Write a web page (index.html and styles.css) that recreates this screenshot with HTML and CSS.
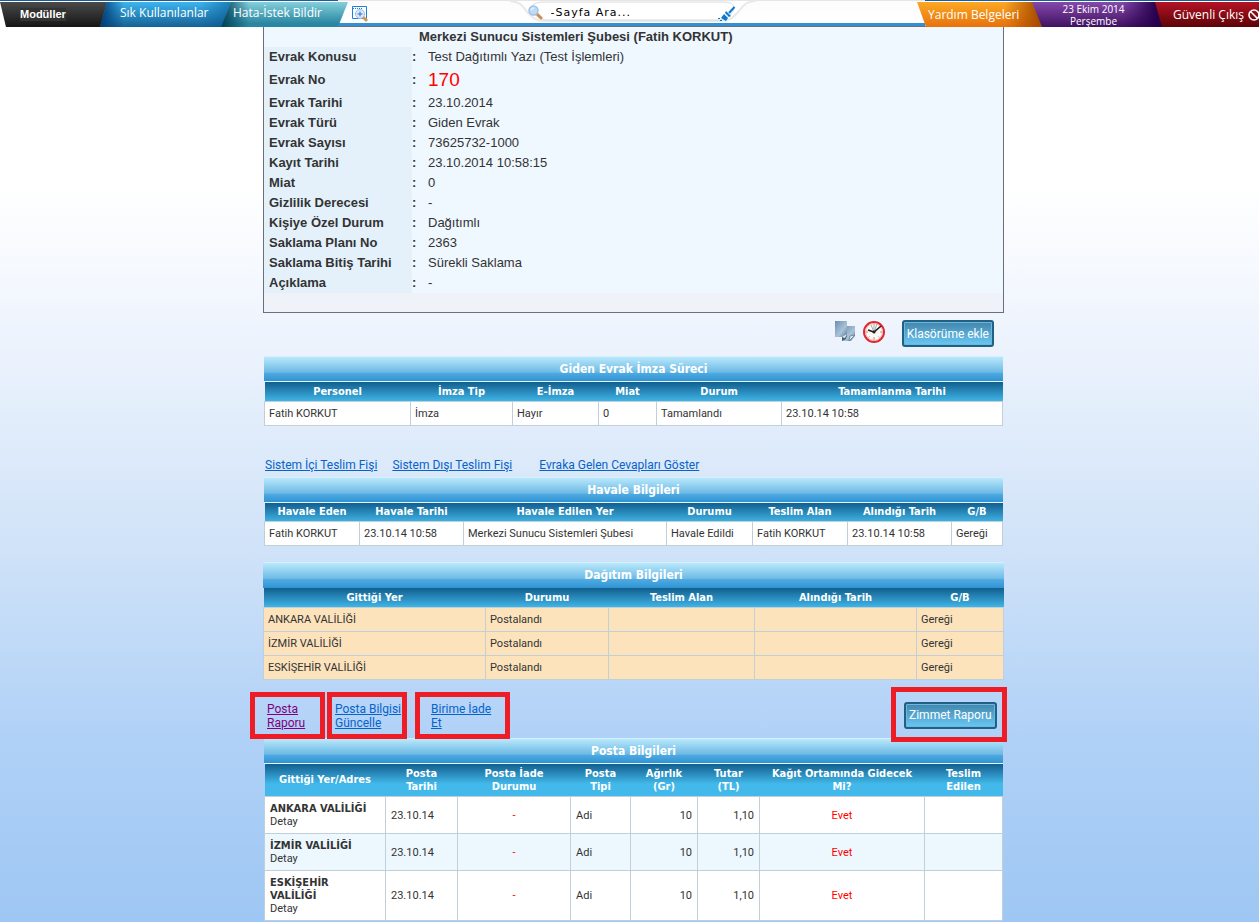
FILE: index.html
```html
<!DOCTYPE html>
<html lang="tr">
<head>
<meta charset="utf-8">
<title>Evrak</title>
<link rel="stylesheet" href="styles.css">
</head>
<body>
<header class="topbar">
  <nav class="tabs">
    <a class="tab tab-modules" href="#"><span>Modüller</span></a>
    <a class="tab tab-favorites" href="#">Sık Kullanılanlar</a>
    <a class="tab tab-report" href="#">Hata-İstek Bildir</a>
  </nav>
  <div class="middle">
    <button class="icon-button preview" type="button" aria-label="Önizleme">
      <svg width="18" height="18" viewBox="0 0 18 18"><path d="M1.500 1.500h14v12h-14z" fill="#fff" stroke="#1c7fe0"/><path d="M2 3.500h9" stroke="#1c7fe0" stroke-dasharray="1 1"/><path d="M12 12l4 4" stroke="#d59a52" stroke-width="3"/><circle cx="9" cy="9" r="4.500" fill="#dcebfb" stroke="#9bbce0"/><path d="M6.500 9h5M9 6.500v5" stroke="#2d6fc4"/></svg>
    </button>
    <form class="search">
      <svg class="search-shape" viewBox="0 0 246 23" preserveAspectRatio="none" aria-hidden="true"><path d="M0 1C14 2 13 9 20 15C26 21 30 21 36 21H210C218 21 222 19 228 12C234 5 235 2 246 1" fill="#fff" stroke="#e9e9e9" stroke-width="2"/><path d="M34 2C22 2 18 8 24 14Q29 20 36 20H208Q216 20 221 14C227 7 224 2 212 2Z" fill="#fff" stroke="#dcdcdc"/></svg>
      <svg class="lens" width="15" height="15" viewBox="0 0 15 15" aria-hidden="true"><path d="M9 9l4 4" stroke="#cf8f4c" stroke-width="3" stroke-linecap="round"/><circle cx="5.500" cy="5.500" r="4.500" fill="#bcdcf7" stroke="#a3c2e6" stroke-width="1.500"/><path d="M3 5a3 3 0 0 1 3-2" stroke="#fff" fill="none"/></svg>
      <input type="text" class="search-input" value="-Sayfa Ara..." aria-label="Sayfa Ara">
      <button class="icon-button broom" type="button" aria-label="Temizle">
        <svg width="18" height="16" viewBox="0 0 18 16"><path d="M16.500 1L11 7" stroke="#0b78cf" stroke-width="2"/><path d="M8 5l5 5-2 1-4-4z" fill="#0b78cf"/><path d="M6 8l4 4-2 3-5-3z" fill="#0b78cf"/><path d="M0 12h2v1H0zM2 14h2v1H2z" fill="#0b78cf"/></svg>
      </button>
    </form>
  </div>
  <nav class="tabs">
    <a class="tab tab-help" href="#">Yardım Belgeleri</a>
    <div class="tab tab-date">23 Ekim 2014<br>Perşembe</div>
    <a class="tab tab-exit" href="#">Güvenli Çıkış
      <svg width="14" height="14" viewBox="0 0 14 14" aria-hidden="true"><circle cx="7" cy="7" r="5" fill="none" stroke="#fff" stroke-width="1.600"/><path d="M3.500 3.500l7 7" stroke="#fff" stroke-width="1.600"/></svg></a>
  </nav>
</header>
<main class="page">
  <section class="summary">
    <table class="facts">
      <thead><tr><td></td><th class="unit" colspan="2">Merkezi Sunucu Sistemleri Şubesi (Fatih KORKUT)</th></tr></thead>
      <tbody>
      <tr><th scope="row">Evrak Konusu</th><td class="colon">:</td><td>Test Dağıtımlı Yazı (Test İşlemleri)</td></tr>
      <tr class="number-row"><th scope="row">Evrak No</th><td class="colon">:</td><td class="number">170</td></tr>
      <tr><th scope="row">Evrak Tarihi</th><td class="colon">:</td><td>23.10.2014</td></tr>
      <tr><th scope="row">Evrak Türü</th><td class="colon">:</td><td>Giden Evrak</td></tr>
      <tr><th scope="row">Evrak Sayısı</th><td class="colon">:</td><td>73625732-1000</td></tr>
      <tr><th scope="row">Kayıt Tarihi</th><td class="colon">:</td><td>23.10.2014 10:58:15</td></tr>
      <tr><th scope="row">Miat</th><td class="colon">:</td><td>0</td></tr>
      <tr><th scope="row">Gizlilik Derecesi</th><td class="colon">:</td><td>-</td></tr>
      <tr><th scope="row">Kişiye Özel Durum</th><td class="colon">:</td><td>Dağıtımlı</td></tr>
      <tr><th scope="row">Saklama Planı No</th><td class="colon">:</td><td>2363</td></tr>
      <tr><th scope="row">Saklama Bitiş Tarihi</th><td class="colon">:</td><td>Sürekli Saklama</td></tr>
      <tr><th scope="row">Açıklama</th><td class="colon">:</td><td>-</td></tr>
      </tbody>
    </table>
    <div class="summary-foot"></div>
  </section>

  <div class="tools">
    <button class="icon-button" type="button" aria-label="Kopyala">
      <svg width="22" height="22" viewBox="0 0 22 22"><defs><linearGradient id="sheet" x2="1" y2="1"><stop stop-color="#6d8db0"/><stop offset=".6" stop-color="#a9c3d8"/><stop offset="1" stop-color="#5d7d9f"/></linearGradient></defs><path d="M1 1h12v16H1z" fill="url(#sheet)"/><path d="M13 6h8v10l-4 5H8v-4h5z" fill="url(#sheet)"/><path d="M21 15l-5 1-1 5z" fill="#e3edf4" stroke="#56728e" stroke-width=".7"/><path d="M8 17l5-3-1 5-4 2z" fill="#46617e"/><path d="M8 17l5-3-2 4z" fill="#e3edf4"/></svg>
    </button>
    <button class="icon-button" type="button" aria-label="Geçmiş">
      <svg width="24" height="24" viewBox="0 0 24 24"><circle cx="12" cy="12" r="10" fill="#fbfbf8" stroke="#dc2a30" stroke-width="2"/><circle cx="12" cy="12" r="8.500" fill="none" stroke="#f3a7a7"/><path d="M12 12L9 5M12 12V4M12 12l3-8" stroke="#aaa"/><path d="M12 17v3M4 12h2M18 12h2M6.500 17.500l1-1M17.500 17.500l-1-1" stroke="#e27a7a"/><path d="M6 10l6 2 7-6" fill="none" stroke="#222" stroke-width="1.600"/><circle cx="12" cy="12" r="1.500" fill="#222"/></svg>
    </button>
    <button class="btn" type="button">Klasörüme ekle</button>
  </div>

  <table class="grid imza">
    <caption>Giden Evrak İmza Süreci</caption>
    <colgroup><col><col><col><col><col><col></colgroup>
    <thead><tr><th>Personel</th><th>İmza Tip</th><th>E-İmza</th><th>Miat</th><th>Durum</th><th>Tamamlanma Tarihi</th></tr></thead>
    <tbody><tr><td>Fatih KORKUT</td><td>İmza</td><td>Hayır</td><td>0</td><td>Tamamlandı</td><td>23.10.14 10:58</td></tr></tbody>
  </table>

  <nav class="slips">
    <a href="#">Sistem İçi Teslim Fişi</a>
    <a href="#">Sistem Dışı Teslim Fişi</a>
    <a class="answers" href="#">Evraka Gelen Cevapları Göster</a>
  </nav>

  <table class="grid havale">
    <caption>Havale Bilgileri</caption>
    <colgroup><col><col><col><col><col><col><col></colgroup>
    <thead><tr><th>Havale Eden</th><th>Havale Tarihi</th><th>Havale Edilen Yer</th><th>Durumu</th><th>Teslim Alan</th><th>Alındığı Tarih</th><th>G/B</th></tr></thead>
    <tbody><tr><td>Fatih KORKUT</td><td>23.10.14 10:58</td><td>Merkezi Sunucu Sistemleri Şubesi</td><td>Havale Edildi</td><td>Fatih KORKUT</td><td>23.10.14 10:58</td><td>Gereği</td></tr></tbody>
  </table>

  <table class="grid dagitim">
    <caption>Dağıtım Bilgileri</caption>
    <colgroup><col><col><col><col><col></colgroup>
    <thead><tr><th>Gittiği Yer</th><th>Durumu</th><th>Teslim Alan</th><th>Alındığı Tarih</th><th>G/B</th></tr></thead>
    <tbody>
      <tr><td>ANKARA VALİLİĞİ</td><td>Postalandı</td><td></td><td></td><td>Gereği</td></tr>
      <tr><td>İZMİR VALİLİĞİ</td><td>Postalandı</td><td></td><td></td><td>Gereği</td></tr>
      <tr><td>ESKİŞEHİR VALİLİĞİ</td><td>Postalandı</td><td></td><td></td><td>Gereği</td></tr>
    </tbody>
  </table>

  <div class="post-actions">
    <div class="mark mark-report"><a class="visited" href="#">Posta<br>Raporu</a></div>
    <div class="mark mark-update"><a href="#">Posta Bilgisi<br>Güncelle</a></div>
    <div class="mark mark-return"><a href="#">Birime İade<br>Et</a></div>
    <div class="mark mark-button"><button class="btn" type="button">Zimmet Raporu</button></div>
  </div>

  <table class="grid posta">
    <caption>Posta Bilgileri</caption>
    <colgroup><col><col><col><col><col><col><col><col></colgroup>
    <thead><tr><th>Gittiği Yer/Adres</th><th>Posta<br>Tarihi</th><th>Posta İade<br>Durumu</th><th>Posta<br>Tipi</th><th>Ağırlık<br>(Gr)</th><th>Tutar<br>(TL)</th><th>Kağıt Ortamında Gidecek<br>Mi?</th><th>Teslim<br>Edilen</th></tr></thead>
    <tbody>
      <tr><td><b>ANKARA VALİLİĞİ</b>Detay</td><td>23.10.14</td><td class="alert">-</td><td>Adi</td><td class="num">10</td><td class="num">1,10</td><td class="alert">Evet</td><td></td></tr>
      <tr class="alt"><td><b>İZMİR VALİLİĞİ</b>Detay</td><td>23.10.14</td><td class="alert">-</td><td>Adi</td><td class="num">10</td><td class="num">1,10</td><td class="alert">Evet</td><td></td></tr>
      <tr><td><b>ESKİŞEHİR<br>VALİLİĞİ</b>Detay</td><td>23.10.14</td><td class="alert">-</td><td>Adi</td><td class="num">10</td><td class="num">1,10</td><td class="alert">Evet</td><td></td></tr>
    </tbody>
  </table>
</main>
</body>
</html>
```
FILE: styles.css
```css
* { box-sizing: border-box; }
body {
  margin: 0;
  min-height: 100vh;
  font: 11px/13px Tahoma, Roboto, sans-serif;
  color: #333;
  background: linear-gradient(#fff 20%, #f3f7fe 32%, #cfe2f8 60%, #b0d1f7 80%, #9ec7f3 100%);
}
a { color: #0663cb; }
a.visited { color: #800080; }
.icon-button { border: 0; padding: 0; background: none; display: block; line-height: 0; }
svg { display: block; }

.topbar {
  position: relative;
  display: flex;
  height: 26px;
  background: linear-gradient(#15609c 1px, #fff 1px);
}
.tabs { display: flex; height: 27px; padding-top: 2px; }
.tab {
  display: flex;
  align-items: center;
  height: 25px;
  color: #fff;
  font: 12px/12px Tahoma, "Open Sans", sans-serif;
  text-decoration: none;
}
.tab-modules {
  width: 108px;
  padding-left: 20px;
  font: bold 11px/13px "Liberation Sans", sans-serif;
  background: linear-gradient(#4a4a4a, #151515);
  clip-path: polygon(0 0, 100% 0, 100% 100%, 6px 100%);
}
.tab-modules span { background: #333; }
.tab-favorites {
  width: 131px;
  margin-left: -8px;
  padding: 0 0 3px 20px;
  background: linear-gradient(90deg, #003c78, transparent 24px, transparent 100px, #00508c88), linear-gradient(#3cb4ee, #176295);
  clip-path: polygon(7px 0, 100% 0, 100% 100%, 0 100%);
}
.tab-report {
  width: 127px;
  margin-left: -10px;
  padding: 0 0 3px 12px;
  background: linear-gradient(90deg, #003f55, transparent 28px), linear-gradient(#84cfdb, #2a87a3 85%);
  clip-path: polygon(10px 0, 100% 0, 117px 100%, 0 100%);
}
.middle {
  flex: 1;
  display: grid;
  grid-template-columns: 1fr auto 1fr;
  height: 26px;
  margin: 0 -8px 0 -10px;
  padding: 0 8px 0 10px;
  border-bottom: 3px solid #3090d1;
  background: linear-gradient(#e6e6e6 1px, #fcfcfc 1px, #fff 20px);
}
.preview { width: 18px; margin: 4px 0 0 3px; }
.search {
  position: relative;
  display: flex;
  align-items: center;
  gap: 8px;
  width: 246px;
  height: 23px;
  padding: 1px 20px 0 18px;
}
.search-shape { position: absolute; inset: 0; width: 100%; height: 100%; }
.lens, .search-input, .broom { position: relative; }
.broom { margin-top: 4px; }
.search-input {
  flex: 1;
  min-width: 0;
  padding: 0;
  border: 0;
  background: none;
  color: #000;
  font: 11px "DejaVu Sans", sans-serif;
  letter-spacing: 1px;
}
.tab-help {
  width: 125px;
  padding: 0 0 0 11px;
  background: linear-gradient(90deg, transparent 88px, #a84c00 122px), linear-gradient(#fba824, #e8720c);
  clip-path: polygon(0 0, 100% 0, 100% 100%, 9px 100%);
}
.tab-date {
  width: 131px;
  margin-left: -10px;
  justify-content: center;
  padding-right: 8px;
  font-size: 10px;
  text-align: center;
  background: linear-gradient(90deg, transparent 90px, #26004c 125px), linear-gradient(#8549ab, #401160);
  clip-path: polygon(0 0, 100% 0, 100% 100%, 10px 100%);
}
.tab-exit {
  width: 104px;
  margin-left: -8px;
  padding-left: 18px;
  gap: 3px;
  white-space: nowrap;
  background: linear-gradient(#b51324, #5b0408);
  clip-path: polygon(0 0, 100% 0, 100% 100%, 7px 100%);
}
.tab-exit svg { flex: none; }

.page { width: 749px; max-width: 100%; margin: 0 auto; padding-left: 8px; }
.summary {
  border: 1px solid #6b7078;
  background: #eff7ff;
  color: #333;
  font: 13px/16px "Liberation Sans", Arial, sans-serif;
}
.facts { width: 100%; border-collapse: collapse; }
.facts td, .facts th { height: 20px; padding: 0; text-align: left; }
.facts tbody th { width: 148px; padding-left: 5px; background: #e4f1fb; }
.facts .colon { width: 16px; font-weight: bold; }
.facts .unit { padding-left: 7px; }
.facts .number-row > * { height: 26px; }
.facts .number { color: #f00; font-size: 19px; }
.summary-foot { height: 19px; background: #eff2f8; }

.tools {
  display: flex;
  justify-content: flex-end;
  align-items: flex-start;
  gap: 6px;
  padding: 7px 10px 9px;
}
.tools .btn { margin-left: 10px; }
.btn {
  height: 27px;
  padding: 0 3px;
  border: 2px solid #1f6184;
  border-radius: 3px;
  background: linear-gradient(#4285ac, #69c8f5);
  box-shadow: inset 0 0 0 1px #6db7dc;
  color: #fff;
  font: 12px/14px Tahoma, Roboto, sans-serif;
  white-space: nowrap;
}

.grid {
  width: calc(100% - 2px);
  margin: 0 1px;
  table-layout: fixed;
  border-collapse: collapse;
}
.grid caption {
  height: 26px;
  padding-top: 1px;
  border-top: 1px solid #d3f0fc;
  border-bottom: 1px solid #e4f5fd;
  background: linear-gradient(#b9e8fb, #6cb9e5 64%, #50aae0 66%, #2f94d4);
  color: #fff;
  font: bold 12px/22px Tahoma, "DejaVu Sans Condensed", sans-serif;
}
.grid thead tr { background: linear-gradient(#115e8e, #42b9ea 20px); }
.grid th {
  height: 19px;
  padding: 0;
  color: #fff;
  font: bold 11px/13px Tahoma, "DejaVu Sans Condensed", sans-serif;
}
.grid td { height: 24px; padding: 0 4px; border: 1px solid #c0cfd8; background: #fff; }
.grid b { display: block; font-family: Tahoma, "DejaVu Sans Condensed", sans-serif; }
.imza col:nth-child(1) { width: 146px; }
.imza col:nth-child(2) { width: 102px; }
.imza col:nth-child(3) { width: 86px; }
.imza col:nth-child(4) { width: 58px; }
.imza col:nth-child(5) { width: 125px; }
.slips { display: flex; gap: 15px; padding: 32px 2px 4px; font-size: 12px; line-height: 15px; }
.slips .answers { margin-left: 12px; }
.havale col:nth-child(1) { width: 95px; }
.havale col:nth-child(2) { width: 104px; }
.havale col:nth-child(3) { width: 203px; }
.havale col:nth-child(4) { width: 86px; }
.havale col:nth-child(5) { width: 95px; }
.havale col:nth-child(6) { width: 104px; }
.dagitim { width: 100%; margin: 16px 0 0; }
.dagitim caption { border-bottom: 0; }
.dagitim td { background: #fce3bc; }
.dagitim col:nth-child(1) { width: 222px; }
.dagitim col:nth-child(2) { width: 123px; }
.dagitim col:nth-child(3) { width: 146px; }
.dagitim col:nth-child(4) { width: 162px; }

.post-actions {
  position: relative;
  z-index: 1;
  display: flex;
  align-items: flex-start;
  height: 62px;
  margin: 0 -3px -4px -13px;
  padding-top: 7px;
  font-size: 12px;
  line-height: 14px;
}
.mark { height: 47px; margin-top: 5px; border: 5px solid #ee1c25; padding-top: 5px; white-space: nowrap; }
.mark-report { width: 75px; padding-left: 12px; }
.mark-update { width: 80px; margin-left: 2px; padding-left: 3px; }
.mark-return { width: 95px; margin-left: 8px; padding-left: 11px; }
.mark-button { height: 55px; width: 116px; margin: 0 0 0 auto; padding: 10px 0 0 8px; }

.posta thead th { height: 33px; }
.posta td { height: 37px; padding: 5px; }
.posta .alt td { background: #edf8fe; }
.posta tr:last-child td { height: 50px; }
.posta .alert { color: #f00; text-align: center; }
.posta .num { text-align: right; }
.posta col:nth-child(1) { width: 121px; }
.posta col:nth-child(2) { width: 72px; }
.posta col:nth-child(3) { width: 113px; }
.posta col:nth-child(4) { width: 60px; }
.posta col:nth-child(5) { width: 67px; }
.posta col:nth-child(6) { width: 62px; }
.posta col:nth-child(7) { width: 165px; }
```
